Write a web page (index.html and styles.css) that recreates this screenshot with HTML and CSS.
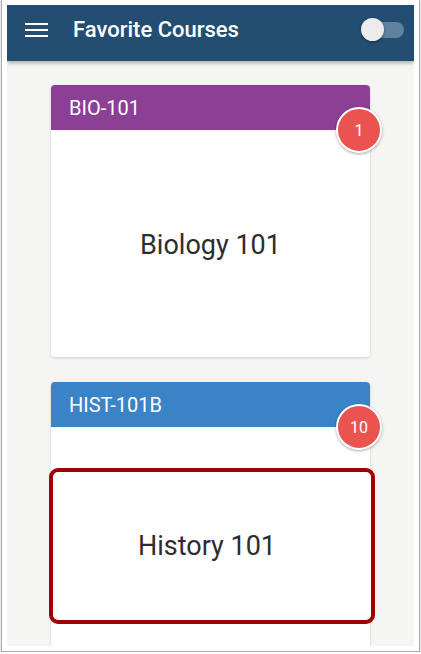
FILE: index.html
```html
<!DOCTYPE html>
<html>
<head>
<meta charset="utf-8">
<link rel="stylesheet" href="styles.css">
</head>
<body>
<div class="frame">
  <div class="screen">
    <header class="appbar">
      <div class="menu"><span></span><span></span><span></span></div>
      <h1 class="title">Favorite Courses</h1>
      <div class="toggle"><div class="track"></div><div class="thumb"></div></div>
    </header>
    <main class="content">
      <section class="card">
        <div class="card-head purple">BIO-101</div>
        <div class="badge">1</div>
        <div class="card-body">Biology 101</div>
      </section>
      <section class="card card-open">
        <div class="card-head blue">HIST-101B</div>
        <div class="badge">10</div>
        <div class="card-body2">
          <div class="focus">History 101</div>
        </div>
      </section>
    </main>
  </div>
</div>
</body>
</html>
```
FILE: styles.css
```css
* { box-sizing: border-box; }
html, body { margin: 0; padding: 0; background: #fff; }
body { font-family: Roboto, "Noto Sans", sans-serif; }

.frame {
  margin-left: 1px;
  width: 419px;
  height: 652px;
  padding: 5px 5px 5px 5px;
  border: 1px solid #aaa;
  border-top: none;
  box-shadow: 0 1px 2px rgba(0,0,0,0.25);
}
.screen {
  width: 407px;
  height: 641px;
  background: #f5f5f3;
  overflow: hidden;
  display: flex;
  flex-direction: column;
}
.appbar {
  flex: none;
  height: 56px;
  background: #234e72;
  display: flex;
  align-items: center;
  padding-left: 18px;
  padding-right: 9px;
  padding-bottom: 7px;
  box-shadow: 0 2px 4px rgba(0,0,0,0.3);
  position: relative;
  z-index: 2;
}
.menu {
  width: 23px;
  height: 14px;
  display: flex;
  flex-direction: column;
  justify-content: space-between;
}
.menu span { display: block; height: 2px; background: #fff; }
.title {
  margin: 0 0 0 25px;
  color: #fff;
  font-size: 22px;
  font-weight: 500;
  flex: 1;
  line-height: 26px;
}
.toggle {
  position: relative;
  width: 44px;
  height: 24px;
}
.track {
  position: absolute;
  left: 1px; top: 4px;
  width: 42px; height: 16px;
  border-radius: 8px;
  background: #5f829f;
}
.thumb {
  position: absolute;
  left: 0; top: 0;
  width: 23px; height: 23px;
  border-radius: 50%;
  background: #ececec;
  box-shadow: 0 1px 3px rgba(0,0,0,0.4);
}
.content {
  padding: 24px 44px 0 44px;
  display: flex;
  flex-direction: column;
  gap: 25px;
}
.card {
  position: relative;
  width: 319px;
  background: #fff;
  border-radius: 4px;
  box-shadow: 0 1px 3px rgba(0,0,0,0.16);
}
.card-head {
  height: 45px;
  border-radius: 4px 4px 0 0;
  color: #fff;
  font-size: 20px;
  padding-left: 18px;
  display: flex;
  align-items: center;
}
.purple { background: #8b3f95; }
.blue { background: #3b83c7; }
.card-body {
  height: 227px;
  display: flex;
  align-items: center;
  justify-content: center;
  font-size: 27px;
  color: #2d2d2d;
  padding-top: 3px;
}
.badge {
  position: absolute;
  left: 285px;
  top: 22px;
  width: 46px;
  height: 46px;
  border-radius: 50%;
  background: #ea5350;
  border: 2px solid #fff;
  box-shadow: 0 1px 3px rgba(0,0,0,0.35);
  color: #fff;
  font-size: 16px;
  display: flex;
  align-items: center;
  justify-content: center;
}
.card-body2 {
  height: 260px;
  padding-top: 41px;
}
.focus {
  margin-left: -2px;
  width: 326px;
  height: 156px;
  border: 4px solid #a00000;
  border-radius: 9px;
  background: #fff;
  display: flex;
  align-items: center;
  justify-content: center;
  font-size: 27px;
  color: #2d2d2d;
  padding-right: 10px;
}
```
